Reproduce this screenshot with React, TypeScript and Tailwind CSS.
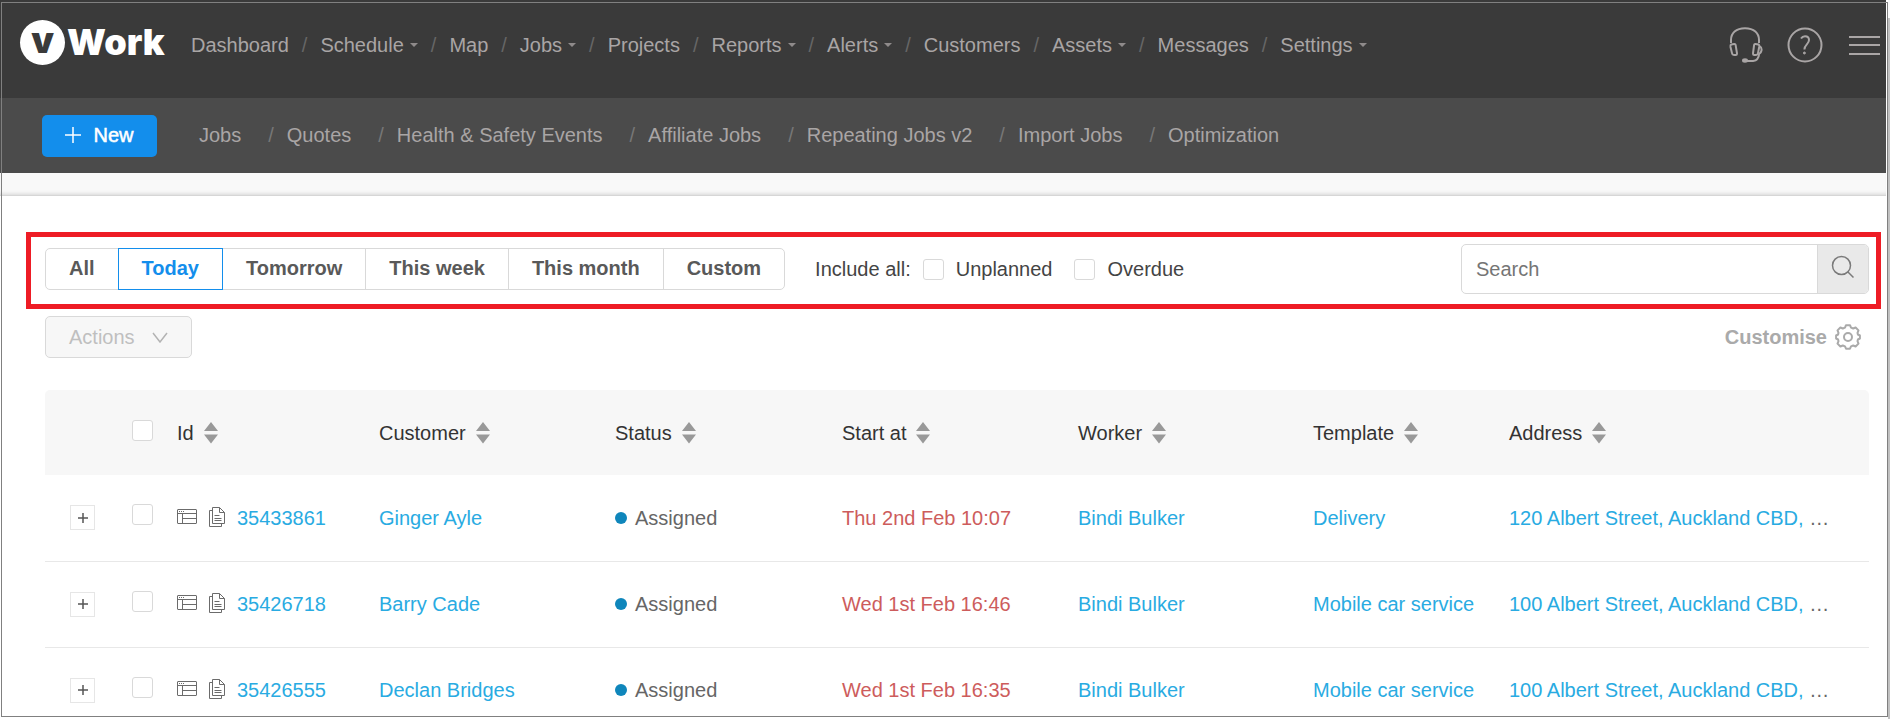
import React, { useState } from 'react';

type NavItem = { label: string; menu?: boolean };

const NAV_ITEMS: NavItem[] = [
  { label: 'Dashboard' },
  { label: 'Schedule', menu: true },
  { label: 'Map' },
  { label: 'Jobs', menu: true },
  { label: 'Projects' },
  { label: 'Reports', menu: true },
  { label: 'Alerts', menu: true },
  { label: 'Customers' },
  { label: 'Assets', menu: true },
  { label: 'Messages' },
  { label: 'Settings', menu: true },
];

const SUB_NAV = [
  'Jobs',
  'Quotes',
  'Health & Safety Events',
  'Affiliate Jobs',
  'Repeating Jobs v2',
  'Import Jobs',
  'Optimization',
];

const RANGES = ['All', 'Today', 'Tomorrow', 'This week', 'This month', 'Custom'];

const COLUMNS = ['Id', 'Customer', 'Status', 'Start at', 'Worker', 'Template', 'Address'];

const JOBS = [
  {
    id: '35433861',
    customer: 'Ginger Ayle',
    status: 'Assigned',
    start: 'Thu 2nd Feb 10:07',
    worker: 'Bindi Bulker',
    template: 'Delivery',
    address: '120 Albert Street, Auckland CBD,',
  },
  {
    id: '35426718',
    customer: 'Barry Cade',
    status: 'Assigned',
    start: 'Wed 1st Feb 16:46',
    worker: 'Bindi Bulker',
    template: 'Mobile car service',
    address: '100 Albert Street, Auckland CBD,',
  },
  {
    id: '35426555',
    customer: 'Declan Bridges',
    status: 'Assigned',
    start: 'Wed 1st Feb 16:35',
    worker: 'Bindi Bulker',
    template: 'Mobile car service',
    address: '100 Albert Street, Auckland CBD,',
  },
];

const CHECKBOX =
  'block size-[21px] shrink-0 appearance-none rounded-[3px] border border-[#d9d9d9] bg-white checked:bg-[#138eec]';

const HeadsetIcon = () => (
  <svg width="34" height="36" viewBox="0 0 34 36" fill="none" stroke="currentColor" strokeWidth="2">
    <path d="M2 16V13C2 6 7 1.200 16 1.200s14 4.800 14 11.800v3" />
    <path d="M2.200 17.500l3-.6c.8-.1 1.300.3 1.400 1l1.400 8.500c.1.900-.3 1.500-1.100 1.600l-1.500.1c-1.300 0-2.100-.7-2.400-2L1.500 20c-.2-1.300 0-2.200.7-2.500z" />
    <path d="M29.500 17.500l-3-.6c-.8-.1-1.300.3-1.400 1L24 26.400c-.1.900.3 1.500 1.100 1.600l1.500.1c1.300 0 2.100-.7 2.400-2l1.200-6.100c.2-1.300 0-2.200-.7-2.500z" />
    <path d="M30.500 19c1.800 1 2.300 2.500 2 4.500-.2 1.500-1 2.500-2.400 3.500-.3 4-2 6.500-6 7h-6.500" />
    <ellipse cx="16" cy="33.500" rx="2" ry="1.200" fill="currentColor" />
  </svg>
);

const HelpIcon = () => (
  <svg width="36" height="36" viewBox="0 0 36 36" fill="none" stroke="currentColor">
    <circle cx="18" cy="18" r="16.500" strokeWidth="2" />
    <path d="M14 11.500c1-1.500 2.300-2.200 4-2.200 2.500 0 4 1.500 4 3.700 0 4.300-4.600 4.500-4.600 9.500" strokeWidth="2" />
    <circle cx="17.400" cy="26" r="1" fill="currentColor" />
  </svg>
);

const MenuIcon = () => (
  <svg width="31" height="20" viewBox="0 0 31 20" stroke="currentColor" strokeWidth="2">
    <path d="M0 2h31M0 10h31M0 19h31" />
  </svg>
);

const SearchIcon = () => (
  <svg width="24" height="24" viewBox="0 0 24 24" fill="none" stroke="#7a7a7a" strokeWidth="1.500">
    <circle cx="10.500" cy="10.500" r="9" />
    <path d="M17 17l5.500 5.500" />
  </svg>
);

const GearIcon = () => (
  <svg width="26" height="26" viewBox="0 0 26 26" fill="none" stroke="#aaa" strokeWidth="2">
    <path
      strokeLinejoin="round"
      d="M11 1.200h4l1 2.400 2.200.9 2.400-1 2.900 2.900-1 2.400.4 1.700 2 1v3l-2 1-.4 1.700 1 2.400-2.900 2.900-2.400-1-2.200.9-1 2.300h-4l-1-2.300-2.200-.9-2.400 1-2.900-2.900 1-2.400-.4-1.700-2-1v-3l2-1 .4-1.700-1-2.400 2.900-2.900 2.400 1 2.200-.9z"
    />
    <circle cx="13" cy="13" r="4" />
  </svg>
);

const SortIcon = () => (
  <svg width="14" height="22" viewBox="0 0 14 22" fill="#999">
    <path d="M7 0l7 9H0zM7 21.500l7-9H0z" />
  </svg>
);

const DetailIcon = () => (
  <svg width="20" height="16" viewBox="0 0 20 16" fill="none" stroke="#6b6b6b">
    <rect x=".5" y=".5" width="19" height="14" rx=".5" />
    <path d="M.5 4.500h19M5.500 4.500v10M5.500 9.500h14" />
    <path d="M2 2.500h6" strokeDasharray="1 1" />
  </svg>
);

const CopyIcon = () => (
  <svg width="16" height="20" viewBox="0 0 16 20" fill="none" stroke="#6b6b6b">
    <path d="M3.500.5h7l5 5v11h-12zM10.500.5v5h5" />
    <path d="M3.500 3.500h-3v16h12v-3" />
    <path d="M5.500 8.500h5M5.500 11.500h7M5.500 13.500h7" />
  </svg>
);

const Header = () => (
  <header className="text-[#a9a5a5]">
    <div className="flex h-[98px] items-start justify-between bg-[#3a3a3a] pt-5 pr-[6px] pl-5">
      <div className="flex">
        <a
          href="#"
          className="flex h-[45px] w-[149px] items-center gap-[2px] font-['Inter',sans-serif] text-[36px] leading-[45px] font-black text-white"
        >
          <span className="flex size-[45px] shrink-0 items-center justify-center rounded-full bg-white pb-1 text-[#3a3a3a]">
            v
          </span>
          <span>Work</span>
        </a>
        <nav className="ml-[22px] flex h-[50px] items-center">
          {NAV_ITEMS.map((item, idx) => (
            <React.Fragment key={item.label}>
              {idx > 0 && <span className="mx-[13px] text-[#666]">/</span>}
              <a href="#" className="flex items-center gap-[6px]">
                {item.label}
                {item.menu && (
                  <svg width="8" height="4" viewBox="0 0 8 4" fill="#8f8b8b">
                    <path d="M0 0h8L4 4z" />
                  </svg>
                )}
              </a>
            </React.Fragment>
          ))}
        </nav>
      </div>
      <div className="flex h-[50px] items-center gap-6">
        <button type="button" aria-label="Support">
          <HeadsetIcon />
        </button>
        <button type="button" aria-label="Help">
          <HelpIcon />
        </button>
        <button type="button" aria-label="Menu" className="ml-[2px]">
          <MenuIcon />
        </button>
      </div>
    </div>

    <div className="flex h-[75px] items-center bg-[#4b4b4b] pl-[42px]">
      <button
        type="button"
        className="flex h-[42px] w-[115px] items-center justify-center gap-3 rounded-[5px] bg-[#138eec] pb-[2px] text-white"
      >
        <svg width="16" height="16" viewBox="0 0 16 16" stroke="currentColor" strokeWidth="1.500">
          <path d="M8 0v16M0 8h16" />
        </svg>
        <span className="[-webkit-text-stroke:0.500px_white]">New</span>
      </button>
      <nav className="ml-[42px] flex items-center pb-[2px]">
        {SUB_NAV.map((label, idx) => (
          <React.Fragment key={label}>
            {idx > 0 && <span className="mr-[13px] ml-[27px] text-[#777]">/</span>}
            <a href="#">{label}</a>
          </React.Fragment>
        ))}
      </nav>
    </div>
  </header>
);

const FilterBar = () => {
  const [range, setRange] = useState('Today');

  return (
    <div className="flex items-center justify-between border-[5px] border-[#ee1c25] pt-[7px] pr-[7px] pb-[10px] pl-[14px]">
      <div className="flex items-center">
        <div className="flex">
          {RANGES.map((label) => (
            <button
              key={label}
              type="button"
              onClick={() => setRange(label)}
              className={`
                -ml-px h-[42px] border px-[23px] pb-[2px] font-bold first:ml-0 first:rounded-l-[5px] last:rounded-r-[5px]
                ${range === label ? 'z-10 border-[#138eec] text-[#138eec]' : 'border-[#d9d9d9] text-[#595959]'}
              `}
            >
              {label}
            </button>
          ))}
        </div>
        <div className="ml-[30px] flex items-center text-[#444]">
          <span>Include all:</span>
          <label className="ml-3 flex items-center gap-3">
            <input type="checkbox" className={CHECKBOX} />
            Unplanned
          </label>
          <label className="ml-[22px] flex items-center gap-3">
            <input type="checkbox" className={CHECKBOX} />
            Overdue
          </label>
        </div>
      </div>
      <form className="flex h-[50px] w-[408px] overflow-hidden rounded-[5px] border border-[#d9d9d9]">
        <input
          type="text"
          aria-label="Search"
          placeholder="Search"
          className="min-w-0 flex-1 px-[14px] outline-none placeholder:text-[#757575]"
        />
        <button
          type="button"
          aria-label="Run search"
          className="flex w-[51px] items-center justify-center border-l border-[#d9d9d9] bg-[#e9e9e9] pb-1"
        >
          <SearchIcon />
        </button>
      </form>
    </div>
  );
};

const JobsTable = () => (
  <table className="w-full table-fixed border-collapse text-left">
    <colgroup>
      <col className="w-[87px]" />
      <col className="w-[45px]" />
      <col className="w-[202px]" />
      <col className="w-[236px]" />
      <col className="w-[227px]" />
      <col className="w-[236px]" />
      <col className="w-[235px]" />
      <col className="w-[196px]" />
      <col />
    </colgroup>
    <thead>
      <tr className="h-[85px] text-[#333]">
        <th className="rounded-tl-[5px] bg-[#f7f7f7]" aria-label="Expand" />
        <th className="bg-[#f7f7f7] pb-1">
          <input type="checkbox" aria-label="Select all jobs" className={CHECKBOX} />
        </th>
        {COLUMNS.map((label) => (
          <th key={label} className="bg-[#f7f7f7] font-normal last:rounded-tr-[5px]">
            <button type="button" className="flex items-center gap-[10px]">
              {label}
              <SortIcon />
            </button>
          </th>
        ))}
      </tr>
    </thead>
    <tbody className="text-[#666]">
      {JOBS.map((job) => (
        <tr key={job.id} className="h-[86px] border-b border-[#e8e8e8]">
          <td className="pl-[25px]">
            <button
              type="button"
              aria-label={`Expand job ${job.id}`}
              className="flex size-[25px] items-center justify-center border border-[#e6e6e6]"
            >
              <svg width="10" height="10" viewBox="0 0 10 10" stroke="#555" strokeWidth="1.500">
                <path d="M5 0v10M0 5h10" />
              </svg>
            </button>
          </td>
          <td className="pb-[6px]">
            <input type="checkbox" aria-label={`Select job ${job.id}`} className={CHECKBOX} />
          </td>
          <td>
            <div className="flex items-center">
              <button type="button" aria-label="Details" className="mr-3 pb-[2px]">
                <DetailIcon />
              </button>
              <button type="button" aria-label="Copy" className="mr-3 pb-[2px]">
                <CopyIcon />
              </button>
              <a href="#" className="text-[#29abe2]">{job.id}</a>
            </div>
          </td>
          <td>
            <a href="#" className="text-[#29abe2]">{job.customer}</a>
          </td>
          <td>
            <div className="flex items-center gap-2">
              <span className="size-3 rounded-full bg-[#0f86bb]" />
              {job.status}
            </div>
          </td>
          <td className="text-[#cd5c5c]">{job.start}</td>
          <td>
            <a href="#" className="text-[#29abe2]">{job.worker}</a>
          </td>
          <td>
            <a href="#" className="text-[#29abe2]">{job.template}</a>
          </td>
          <td className="truncate">
            <a href="#" className="text-[#29abe2]">{job.address}</a> …
          </td>
        </tr>
      ))}
    </tbody>
  </table>
);

export default function App() {
  return (
    <div className="relative flex h-screen overflow-hidden bg-white font-['Liberation_Sans',Arial,sans-serif] text-[20px] leading-6">
      <div className="min-w-0 flex-1">
        <Header />
        <div className="h-[23px] border-b border-[#d6d6d6] bg-[#f9f9f9] shadow-[inset_0_-4px_4px_-3px_rgba(0,0,0,0.15)]" />
        <main className="pt-9 pr-[5px] pl-[26px]">
          <FilterBar />
          <div className="pr-3 pl-[19px]">
            <div className="flex items-center justify-between pt-[7px] pr-2">
              <button
                type="button"
                disabled
                className="flex h-[42px] items-center gap-[17px] rounded-[5px] border border-[#d9d9d9] bg-[#f7f7f7] px-[23px] text-[#bfbfbf]"
              >
                Actions
                <svg width="16" height="11" viewBox="0 0 16 11" fill="none" stroke="#b3b3b3" strokeWidth="1.500">
                  <path d="M1 1l7 9 7-9" />
                </svg>
              </button>
              <button type="button" className="flex items-center gap-2 font-bold text-[#aaa]">
                Customise
                <GearIcon />
              </button>
            </div>
            <div className="mt-8">
              <JobsTable />
            </div>
          </div>
        </main>
      </div>

      {/* scrollbar edge */}
      <div className="w-1 shrink-0 border-l-2 border-white bg-[#c1c1c1]">
        <div className="h-[18px] bg-[#f8f8f8]" />
      </div>

      {/* frame line over the whole page */}
      <div className="pointer-events-none absolute top-[2px] right-[2px] bottom-[2px] left-px border border-[#808080]" />
    </div>
  );
}
